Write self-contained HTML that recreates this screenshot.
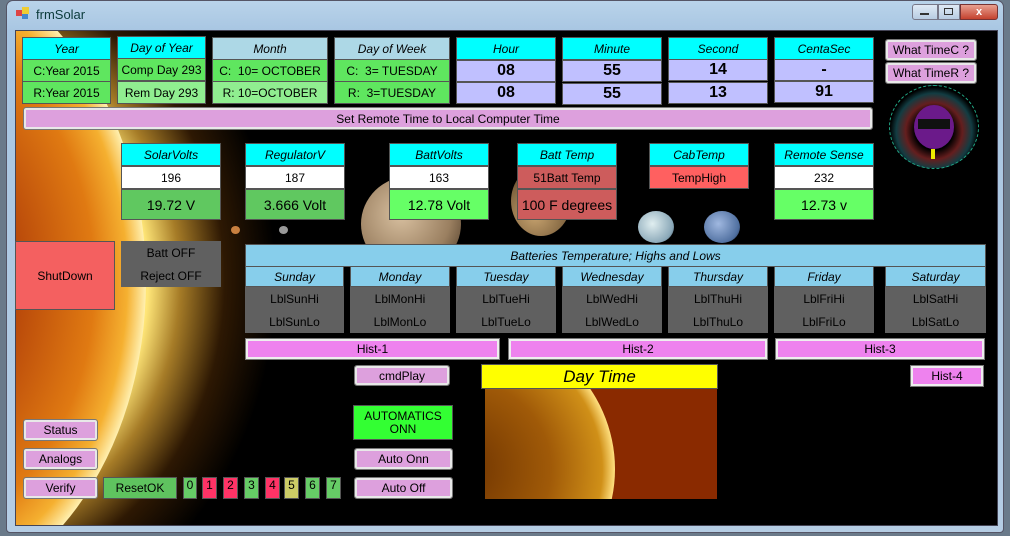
<!DOCTYPE html>
<html><head><meta charset="utf-8"><style>
*{margin:0;padding:0;box-sizing:border-box}
html,body{width:1010px;height:536px;overflow:hidden}
body{background:#6a7a8a;font-family:"Liberation Sans",sans-serif;position:relative}
.win{position:absolute;left:6px;top:0;width:998px;height:533px;background:linear-gradient(#b9d3ea,#a8c6e2 30px,#b5cde4);border:1px solid #556;border-radius:7px 7px 4px 4px}
.client{position:absolute;left:15px;top:30px;width:983px;height:496px;background:#000;overflow:hidden;border:1px solid #445}
.a{position:absolute;display:flex;align-items:center;justify-content:center;text-align:center;font-size:12px;color:#000;border:1px solid #555;white-space:nowrap;overflow:hidden}
.h{background:#00ffff;font-style:italic;font-size:12px}
.g{background:#5fe65f}.lg{background:#90ee90}
.lv{background:#c0c0ff;font-weight:bold;font-size:16px}
.btn{background:#dda0dd;border:2px solid #e8e8e8;outline:1px solid #777;border-radius:2px}
.vb{background:#ee82ee;border:2px solid #eee;outline:1px solid #777}
.sky{background:#87ceeb;font-style:italic}
.gr{background:#606060;border:none}
</style></head><body>
<div class="win"></div>
<div style="position:absolute;left:16px;top:10px;width:6px;height:6px;background:#d44"></div>
<div style="position:absolute;left:22px;top:7px;width:7px;height:7px;background:#ec3"></div>
<div style="position:absolute;left:22px;top:14px;width:6px;height:5px;background:#48c"></div>
<div style="position:absolute;left:36px;top:7px;font-size:13px;color:#0a3a3a">frmSolar</div>
<div style="position:absolute;left:912px;top:4px;width:26px;height:16px;border:1px solid #778;border-radius:3px 0 0 3px;background:linear-gradient(#dfe9f5,#b8cce2)"></div>
<div style="position:absolute;left:938px;top:4px;width:22px;height:16px;border:1px solid #778;background:linear-gradient(#dfe9f5,#b8cce2)"></div>
<div style="position:absolute;left:960px;top:4px;width:38px;height:16px;border:1px solid #733;border-radius:0 3px 3px 0;background:linear-gradient(#e8a090,#c4422e);color:#fff;font-size:11px;font-weight:bold;text-align:center;line-height:14px">x</div>
<div style="position:absolute;left:920px;top:13px;width:9px;height:2px;background:#333"></div>
<div style="position:absolute;left:944px;top:8px;width:9px;height:7px;border:1px solid #333"></div>

<div class="client">
<div style="position:absolute;left:-380px;top:-110px;width:640px;height:720px;border-radius:50%;background:radial-gradient(closest-side,rgba(255,230,120,1) 60%,rgba(255,190,60,.65) 70%,rgba(150,80,10,.3) 84%,rgba(0,0,0,0) 100%)"></div>
<div style="position:absolute;left:-340px;top:-70px;width:470px;height:640px;border-radius:50%;background:radial-gradient(closest-side,#7a2a05 0%,#b8480a 45%,#e07a12 78%,#f5b030 92%,#fff0b0 100%)"></div>
<div style="position:absolute;left:345px;top:145px;width:100px;height:96px;border-radius:50%;background:radial-gradient(circle at 40% 40%,#d8c0a0,#9a7f60 60%,#3a2a1a)"></div>
<div style="position:absolute;left:495px;top:135px;width:60px;height:70px;border-radius:50%;background:radial-gradient(circle at 40% 70%,#c8a470,#6a5030 70%,#000)"></div>
<div style="position:absolute;left:622px;top:180px;width:36px;height:32px;border-radius:50%;background:radial-gradient(circle at 40% 40%,#e0eef0,#8aa8b8 70%,#203040)"></div>
<div style="position:absolute;left:688px;top:180px;width:36px;height:32px;border-radius:50%;background:radial-gradient(circle at 40% 40%,#a0b8e0,#5070a0 70%,#101830)"></div>
<div style="position:absolute;left:215px;top:195px;width:9px;height:8px;border-radius:50%;background:#c88040"></div>
<div style="position:absolute;left:263px;top:195px;width:9px;height:8px;border-radius:50%;background:#999"></div>
<div style="position:absolute;left:873px;top:54px;width:90px;height:84px;border-radius:50%;border:1px dashed #2a8;background:radial-gradient(circle at 50% 55%,#000 30%,rgba(200,60,60,.5) 45%,rgba(60,200,220,.3) 60%,#000 70%)"></div>
<div style="position:absolute;left:898px;top:74px;width:40px;height:44px;border-radius:50%;background:#6b1a8a"></div>
<div style="position:absolute;left:902px;top:88px;width:32px;height:10px;background:#111"></div>
<div style="position:absolute;left:915px;top:118px;width:4px;height:10px;background:#ee0"></div>
</div>

<div class="a h" style="left:22px;top:37px;width:89px;height:23px">Year</div>
<div class="a g" style="left:22px;top:59px;width:89px;height:23px">C:Year 2015</div>
<div class="a g" style="left:22px;top:81px;width:89px;height:23px">R:Year 2015</div>
<div class="a h" style="left:117px;top:36px;width:89px;height:23px">Day of Year</div>
<div class="a g" style="left:117px;top:58px;width:89px;height:23px">Comp Day 293</div>
<div class="a lg" style="left:117px;top:81px;width:89px;height:23px">Rem Day 293</div>
<div class="a sky" style="left:212px;top:37px;width:116px;height:23px;background:#add8e6">Month</div>
<div class="a g" style="left:212px;top:59px;width:116px;height:23px">C:&nbsp; 10= OCTOBER</div>
<div class="a lg" style="left:212px;top:81px;width:116px;height:23px">R: 10=OCTOBER</div>
<div class="a sky" style="left:334px;top:37px;width:116px;height:23px;background:#add8e6">Day of Week</div>
<div class="a g" style="left:334px;top:59px;width:116px;height:23px">C:&nbsp; 3= TUESDAY</div>
<div class="a g" style="left:334px;top:81px;width:116px;height:23px">R:&nbsp; 3=TUESDAY</div>

<div class="a h" style="left:456px;top:37px;width:100px;height:23px">Hour</div>
<div class="a lv" style="left:456px;top:60px;width:100px;height:22px">08</div>
<div class="a lv" style="left:456px;top:82px;width:100px;height:22px">08</div>
<div class="a h" style="left:562px;top:37px;width:100px;height:23px">Minute</div>
<div class="a lv" style="left:562px;top:60px;width:100px;height:22px">55</div>
<div class="a lv" style="left:562px;top:83px;width:100px;height:22px">55</div>
<div class="a h" style="left:668px;top:37px;width:100px;height:23px">Second</div>
<div class="a lv" style="left:668px;top:59px;width:100px;height:22px">14</div>
<div class="a lv" style="left:668px;top:82px;width:100px;height:22px">13</div>
<div class="a h" style="left:774px;top:37px;width:100px;height:23px">CentaSec</div>
<div class="a lv" style="left:774px;top:59px;width:100px;height:22px">-</div>
<div class="a lv" style="left:774px;top:81px;width:100px;height:22px">91</div>
<div class="a btn" style="left:886px;top:40px;width:90px;height:20px">What TimeC ?</div>
<div class="a btn" style="left:886px;top:63px;width:90px;height:20px">What TimeR ?</div>
<div class="a btn" style="left:24px;top:108px;width:848px;height:21px">Set Remote Time to Local Computer Time</div>

<div class="a h" style="left:121px;top:143px;width:100px;height:23px">SolarVolts</div>
<div class="a" style="left:121px;top:166px;width:100px;height:23px;background:#fff">196</div>
<div class="a" style="left:121px;top:189px;width:100px;height:31px;background:#60c860;font-size:14px">19.72 V</div>
<div class="a h" style="left:245px;top:143px;width:100px;height:23px">RegulatorV</div>
<div class="a" style="left:245px;top:166px;width:100px;height:23px;background:#fff">187</div>
<div class="a" style="left:245px;top:189px;width:100px;height:31px;background:#60c860;font-size:14px">3.666 Volt</div>
<div class="a h" style="left:389px;top:143px;width:100px;height:23px">BattVolts</div>
<div class="a" style="left:389px;top:166px;width:100px;height:23px;background:#fff">163</div>
<div class="a" style="left:389px;top:189px;width:100px;height:31px;background:#66ff66;font-size:14px">12.78 Volt</div>
<div class="a h" style="left:517px;top:143px;width:100px;height:23px">Batt Temp</div>
<div class="a" style="left:517px;top:166px;width:100px;height:23px;background:#cd5c5c">51Batt Temp</div>
<div class="a" style="left:517px;top:189px;width:100px;height:31px;background:#cd5c5c;font-size:14px">100 F degrees</div>
<div class="a h" style="left:649px;top:143px;width:100px;height:23px">CabTemp</div>
<div class="a" style="left:649px;top:166px;width:100px;height:23px;background:#ff6060">TempHigh</div>
<div class="a h" style="left:774px;top:143px;width:100px;height:23px">Remote Sense</div>
<div class="a" style="left:774px;top:166px;width:100px;height:23px;background:#fff">232</div>
<div class="a" style="left:774px;top:189px;width:100px;height:31px;background:#66ff66;font-size:14px">12.73 v</div>

<div class="a" style="left:15px;top:241px;width:100px;height:69px;background:#f46060">ShutDown</div>
<div class="a gr" style="left:121px;top:241px;width:100px;height:23px">Batt OFF</div>
<div class="a gr" style="left:121px;top:264px;width:100px;height:23px">Reject OFF</div>

<div class="a sky" style="left:245px;top:244px;width:741px;height:23px">Batteries Temperature; Highs and Lows</div>
<div class="a sky" style="left:245px;top:266px;width:99px;height:21px">Sunday</div>
<div class="a sky" style="left:350px;top:266px;width:100px;height:21px">Monday</div>
<div class="a sky" style="left:456px;top:266px;width:100px;height:21px">Tuesday</div>
<div class="a sky" style="left:562px;top:266px;width:100px;height:21px">Wednesday</div>
<div class="a sky" style="left:668px;top:266px;width:100px;height:21px">Thursday</div>
<div class="a sky" style="left:774px;top:266px;width:100px;height:21px">Friday</div>
<div class="a sky" style="left:885px;top:266px;width:101px;height:21px">Saturday</div>
<div class="a gr" style="left:245px;top:287px;width:99px;height:23px">LblSunHi</div>
<div class="a gr" style="left:245px;top:310px;width:99px;height:23px">LblSunLo</div>
<div class="a gr" style="left:350px;top:287px;width:100px;height:23px">LblMonHi</div>
<div class="a gr" style="left:350px;top:310px;width:100px;height:23px">LblMonLo</div>
<div class="a gr" style="left:456px;top:287px;width:100px;height:23px">LblTueHi</div>
<div class="a gr" style="left:456px;top:310px;width:100px;height:23px">LblTueLo</div>
<div class="a gr" style="left:562px;top:287px;width:100px;height:23px">LblWedHi</div>
<div class="a gr" style="left:562px;top:310px;width:100px;height:23px">LblWedLo</div>
<div class="a gr" style="left:668px;top:287px;width:100px;height:23px">LblThuHi</div>
<div class="a gr" style="left:668px;top:310px;width:100px;height:23px">LblThuLo</div>
<div class="a gr" style="left:774px;top:287px;width:100px;height:23px">LblFriHi</div>
<div class="a gr" style="left:774px;top:310px;width:100px;height:23px">LblFriLo</div>
<div class="a gr" style="left:885px;top:287px;width:101px;height:23px">LblSatHi</div>
<div class="a gr" style="left:885px;top:310px;width:101px;height:23px">LblSatLo</div>

<div class="a vb" style="left:246px;top:339px;width:253px;height:20px">Hist-1</div>
<div class="a vb" style="left:509px;top:339px;width:258px;height:20px">Hist-2</div>
<div class="a vb" style="left:776px;top:339px;width:208px;height:20px">Hist-3</div>
<div class="a btn" style="left:355px;top:366px;width:94px;height:19px">cmdPlay</div>
<div class="a vb" style="left:911px;top:366px;width:72px;height:20px">Hist-4</div>

<div class="a" style="left:481px;top:364px;width:237px;height:25px;background:#ffff00;font-style:italic;font-size:17px">Day Time</div>
<div style="position:absolute;left:485px;top:389px;width:232px;height:110px;background:#8a2a00;overflow:hidden">
<div style="position:absolute;left:-190px;top:-70px;width:320px;height:300px;border-radius:50%;background:radial-gradient(closest-side,#6a3000,#a05a08 60%,#d09018 92%,#ffe080 100%)"></div>
</div>

<div class="a" style="left:353px;top:405px;width:100px;height:35px;background:#33ff33;line-height:13px;white-space:normal">AUTOMATICS<br>ONN</div>
<div class="a btn" style="left:355px;top:449px;width:97px;height:20px">Auto Onn</div>
<div class="a btn" style="left:355px;top:478px;width:97px;height:20px">Auto Off</div>

<div class="a btn" style="left:24px;top:420px;width:73px;height:20px">Status</div>
<div class="a btn" style="left:24px;top:449px;width:73px;height:20px">Analogs</div>
<div class="a btn" style="left:24px;top:478px;width:73px;height:20px">Verify</div>
<div class="a" style="left:103px;top:477px;width:74px;height:22px;background:#5fc35f">ResetOK</div>
<div class="a" style="left:183px;top:477px;width:14px;height:22px;background:#66cc66;align-items:flex-start">0</div>
<div class="a" style="left:202px;top:477px;width:15px;height:22px;background:#ff3366;align-items:flex-start">1</div>
<div class="a" style="left:223px;top:477px;width:15px;height:22px;background:#ff3366;align-items:flex-start">2</div>
<div class="a" style="left:244px;top:477px;width:15px;height:22px;background:#66cc66;align-items:flex-start">3</div>
<div class="a" style="left:265px;top:477px;width:15px;height:22px;background:#ff3366;align-items:flex-start">4</div>
<div class="a" style="left:284px;top:477px;width:15px;height:22px;background:#cccc66;align-items:flex-start">5</div>
<div class="a" style="left:305px;top:477px;width:15px;height:22px;background:#66cc66;align-items:flex-start">6</div>
<div class="a" style="left:326px;top:477px;width:15px;height:22px;background:#66cc66;align-items:flex-start">7</div>
</body></html>
